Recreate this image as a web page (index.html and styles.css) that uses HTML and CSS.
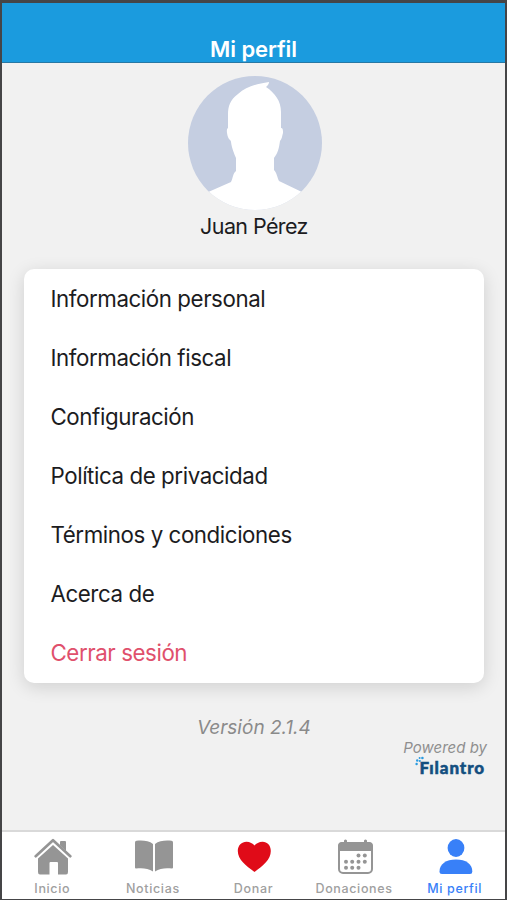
FILE: index.html
```html
<!DOCTYPE html>
<html lang="es">
<head>
  <meta charset="UTF-8">
  <meta name="viewport" content="width=device-width, initial-scale=1.0">
  <title>Mi perfil</title>
  <link rel="stylesheet" href="styles.css">
</head>
<body>
  <div class="app">
    <header class="header">
      <h1>Mi perfil</h1>
    </header>

    <main class="content">
      <!-- Foto y nombre del usuario -->
      <section class="profile">
        <svg class="avatar" viewBox="0 0 134 134">
          <defs>
            <clipPath id="circle"><circle cx="67" cy="67" r="67"/></clipPath>
          </defs>
          <g clip-path="url(#circle)">
            <rect width="134" height="134" fill="#c5cee1"/>
            <path fill="#fff" d="M81 6 C67 8 58 11 50 18 C42 24 40 30 40 39 L40 52 C38 53 39 58 40 61 C41 64 43 64 43 66 C44 73 46 77 48 82 L48 95 C45 97 45 102 43 106 L18 117 V134 H116 V117 L91 105 C89 101 89 97 86 94 L86 82 C90 77 91 72 92 65 C94 63 94 60 95 57 C95 54 95 52 93 52 L93 36 C93 25 87 17 78 11 C80 9 81 8 81 6 Z"/>
          </g>
        </svg>
        <p class="name">Juan Pérez</p>
      </section>

      <ul class="menu">
        <li>Información personal</li>
        <li>Información fiscal</li>
        <li>Configuración</li>
        <li>Política de privacidad</li>
        <li>Términos y condiciones</li>
        <li>Acerca de</li>
        <li class="logout">Cerrar sesión</li>
      </ul>

      <p class="version">Versión 2.1.4</p>

      <div class="powered">
        <span class="powered-text">Powered by</span>
        <div class="brand">
          <svg class="brand-dots" viewBox="0 0 10 10">
            <g fill="#2a9be0">
              <circle cx="1.6" cy="8" r="1.2"/>
              <circle cx="2.2" cy="4.500" r="1.2"/>
              <circle cx="4.800" cy="5" r="1.1"/>
              <circle cx="4.600" cy="2" r="1"/>
              <circle cx="7.400" cy="2" r="1.3"/>
            </g>
          </svg>
          <span class="brand-name">Fılantro</span>
        </div>
      </div>
    </main>

    <!-- Barra de navegación inferior -->
    <nav class="tabs">
      <a class="tab">
        <svg viewBox="0 0 40 38">
          <g fill="#959595">
            <path d="M28 4 Q28 3 29 3 H33 Q34 3 34 4 V15 L28 9 Z"/>
            <path d="M21 7 L36 20.500 V34 Q36 36.500 34 36.500 H26 V25 Q26 24 25 24 H18.500 Q17.500 24 17.500 25 V36.500 H8 Q6 36.500 6 34 V20.500 Z"/>
          </g>
          <path d="M3.200 19.600 L21 3.300 L38.800 19.600" fill="none" stroke="#fff" stroke-width="3.600"/>
          <path d="M3.700 18.200 L21 2.200 L38.300 18.200" fill="none" stroke="#959595" stroke-width="2.700" stroke-linecap="round" stroke-linejoin="round"/>
        </svg>
        <span>Inicio</span>
      </a>
      <a class="tab">
        <svg viewBox="0 0 40 38">
          <g fill="#959595">
            <path d="M20 33.500 C15 30 9 30 3 30.500 Q2 30.500 2 29.500 V4.500 Q2 3 3.500 2.800 C9 2.300 16 2.500 20 6 Z"/>
            <path d="M22 33.500 C27 30 33 30 39 30.500 Q40 30.500 40 29.500 V4.500 Q40 3 38.500 2.800 C33 2.300 26 2.500 22 6 Z"/>
          </g>
        </svg>
        <span>Noticias</span>
      </a>
      <a class="tab">
        <svg viewBox="0 0 40 38">
          <path fill="#e00b18" d="M21.500 34 C12.800 27.500 4.800 21.500 4.800 13 C4.800 7.500 8.800 3.800 13.400 3.800 C17 3.800 19.800 5.600 21.500 7.500 C23.200 5.600 26 3.800 29.600 3.800 C34.200 3.800 37.800 7.500 37.800 13 C37.800 21.500 30.200 27.500 21.500 34 Z"/>
        </svg>
        <span>Donar</span>
      </a>
      <a class="tab">
        <svg viewBox="0 0 40 38">
          <rect x="5" y="5" width="33" height="30" rx="4" fill="none" stroke="#959595" stroke-width="2"/>
          <path fill="#959595" d="M4 13 V8 Q4 4 8 4 H10 V2.500 Q11.500 0.500 13 2.500 V4 H30 V2.500 Q31.500 0.500 33 2.500 V4 H35 Q39 4 39 8 V13 Z"/>
          <g fill="#959595">
            <circle cx="24.500" cy="17.500" r="2"/><circle cx="30.800" cy="17.500" r="2"/>
            <circle cx="12" cy="23.700" r="2"/><circle cx="18.200" cy="23.700" r="2"/><circle cx="24.500" cy="23.700" r="2"/><circle cx="30.800" cy="23.700" r="2"/>
            <circle cx="12" cy="29.800" r="2"/><circle cx="18.200" cy="29.800" r="2"/><circle cx="24.500" cy="29.800" r="2"/>
          </g>
        </svg>
        <span>Donaciones</span>
      </a>
      <a class="tab active">
        <svg viewBox="0 0 40 38">
          <g fill="#3880f8">
            <ellipse cx="21" cy="10" rx="8.400" ry="9"/>
            <path d="M4.500 33.500 C4.500 26 11 21.500 21 21.500 C31 21.500 37.300 26 37.300 33.500 Q37.300 36 35 36 H7 Q4.500 36 4.500 33.500 Z"/>
          </g>
        </svg>
        <span>Mi perfil</span>
      </a>
    </nav>
  </div>
</body>
</html>
```
FILE: styles.css
```css
* {
  box-sizing: border-box;
}
body {
  margin: 0;
  font-family: Inter, "Liberation Sans", sans-serif;
  color: #1c1c1e;
}
h1, p, ul {
  margin: 0;
  padding: 0;
}
/* Contenedor principal */
.app {
  display: flex;
  flex-direction: column;
  height: 900px;
  background-color: #f1f1f1;
  border: 2px solid #454547;
  border-top-width: 3px;
  border-bottom-width: 1px;
}
/* Cabecera */
.header {
  display: flex;
  align-items: flex-end;
  justify-content: center;
  height: 60px;
  background-color: #1b9bde;
  border-bottom: 1px solid #2878a4;
}
.header h1 {
  color: #fff;
  font-size: 22px;
  font-weight: 600;
  line-height: 26px;
  letter-spacing: -0.1px;
}
.content {
  flex: 1;
  display: flex;
  flex-direction: column;
  padding: 13px 21px 0 22px;
}
.profile {
  display: flex;
  flex-direction: column;
  align-items: center;
}
.avatar {
  width: 134px;
  height: 134px;
  margin-left: 1px;
}
.name {
  font-size: 21.5px;
  letter-spacing: -0.6px;
  line-height: 30px;
  margin-top: 1px;
}
/* Menú de opciones */
.menu {
  list-style: none;
  margin-top: 28px;
  background-color: #fff;
  border-radius: 10px;
  box-shadow: 0 4px 18px rgba(0, 0, 0, 0.14);
}
.menu li {
  height: 59px;
  padding-left: 26.5px;
  font-size: 22.3px;
  letter-spacing: -0.42px;
  line-height: 60px;
}
.menu li:last-child {
  height: 60px;
}
.menu .logout {
  color: #e0506c;
}
.version {
  margin-top: 33px;
  text-align: center;
  font-size: 19px;
  font-style: italic;
  line-height: 23px;
  color: #8a8a8a;
}
.powered {
  display: flex;
  flex-direction: column;
  align-items: flex-end;
}
.powered-text {
  margin-right: -3px;
  font-size: 15px;
  font-style: italic;
  line-height: 17px;
  color: #8f8f8f;
}
.brand {
  display: flex;
  align-items: flex-start;
  margin-right: -1px;
}
.brand-dots {
  width: 10px;
  height: 10px;
  margin-right: -6px;
}
.brand-name {
  font-family: Lato, sans-serif;
  font-size: 17px;
  font-weight: 900;
  line-height: 23px;
  letter-spacing: 0.9px;
  color: #134f80;
  -webkit-text-stroke: 0.5px #134f80;
}
/* Navegación */
.tabs {
  display: flex;
  height: 69px;
  background-color: #fff;
  border-top: 2px solid #d9d9d9;
}
.tab {
  flex: 1;
  display: flex;
  flex-direction: column;
  align-items: center;
  padding-top: 6px;
  font-size: 12.5px;
  font-weight: 500;
  letter-spacing: 0.65px;
  line-height: 16px;
  color: #a0a0a0;
}
.tab svg {
  width: 40px;
  height: 38px;
  margin-bottom: 5px;
}
.tab.active {
  color: #3880f8;
}
```
